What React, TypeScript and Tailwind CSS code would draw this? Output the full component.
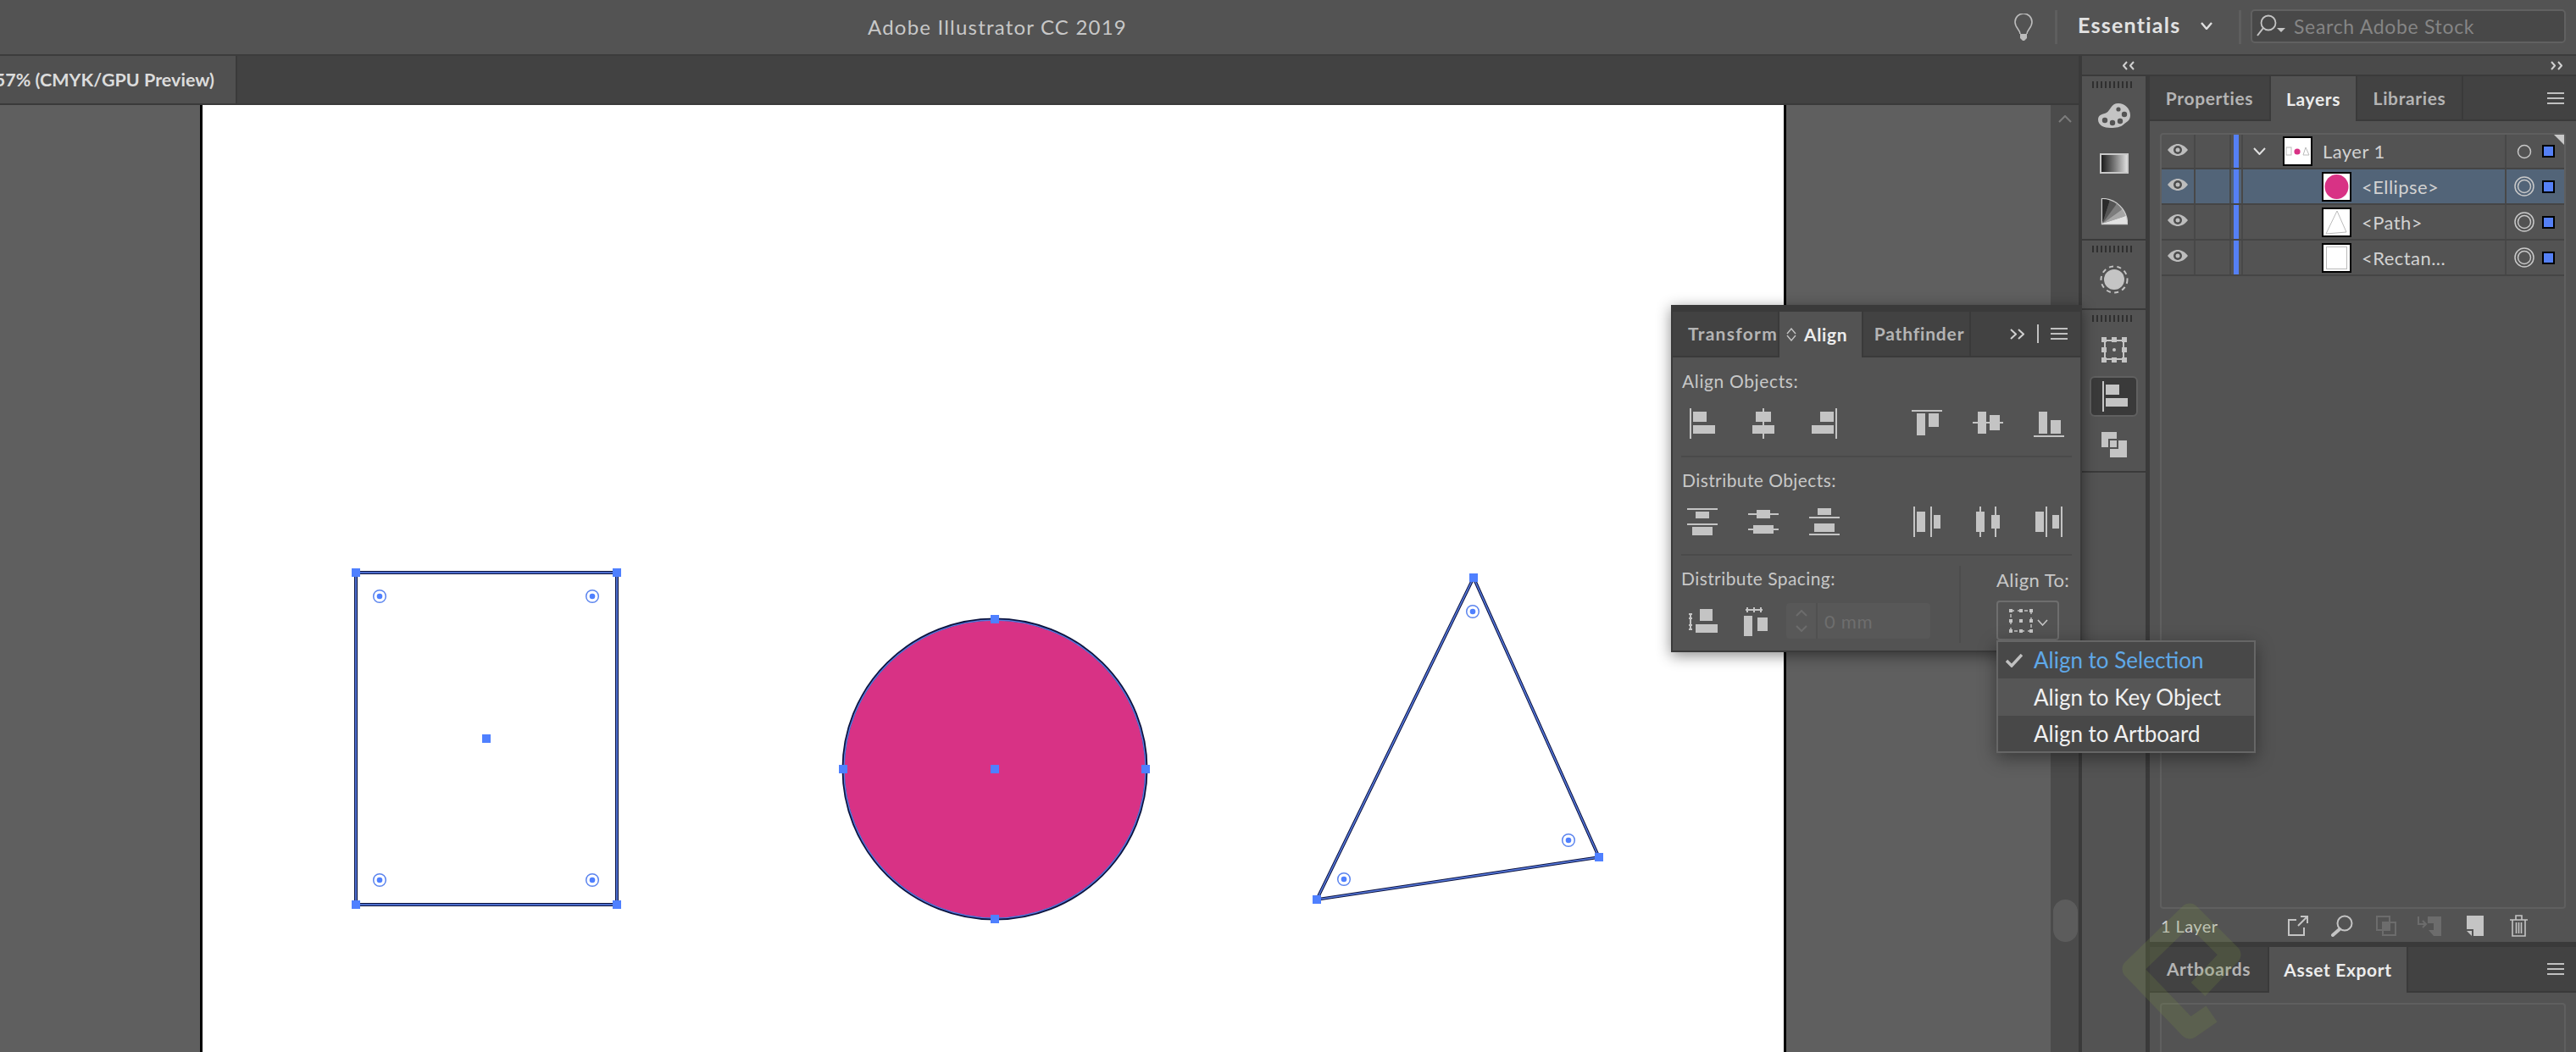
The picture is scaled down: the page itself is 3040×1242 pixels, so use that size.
import type { ReactNode } from 'react'

const ICON = '#c4c4c4'
const HANDLE = '#4f80ff'

function Box({ w, h, children }: { w: number; h: number; children: ReactNode }) {
  return (
    <svg width={w} height={h} viewBox={`0 0 ${w} ${h}`} fill={ICON} className="block shrink-0">
      {children}
    </svg>
  )
}

function R({ x, y, w, h }: { x: number; y: number; w: number; h: number }) {
  return <rect x={x} y={y} width={w} height={h} />
}

function Chevron({ w, h, dir, color = '#d0d0d0', sw = 2 }: { w: number; h: number; dir: 'up' | 'down' | 'left' | 'right'; color?: string; sw?: number }) {
  const pts = {
    down: `1,1 ${w / 2},${h - 1} ${w - 1},1`,
    up: `1,${h - 1} ${w / 2},1 ${w - 1},${h - 1}`,
    left: `${w - 1},1 1,${h / 2} ${w - 1},${h - 1}`,
    right: `1,1 ${w - 1},${h / 2} 1,${h - 1}`,
  }[dir]
  return (
    <svg width={w} height={h} viewBox={`0 0 ${w} ${h}`} fill="none" className="block shrink-0">
      <polyline points={pts} stroke={color} strokeWidth={sw} />
    </svg>
  )
}

function Hamburger({ w }: { w: number }) {
  return (
    <div className="flex flex-col gap-[4px]" style={{ width: w }}>
      <div className="h-[2px] bg-[#c0c0c0]" />
      <div className="h-[2px] bg-[#c0c0c0]" />
      <div className="h-[2px] bg-[#c0c0c0]" />
    </div>
  )
}

function AlignLeftIcon() {
  return (
    <Box w={30} h={36}>
      <R x={0} y={0} w={2} h={36} />
      <R x={4} y={4} w={16} h={12} />
      <R x={4} y={20} w={26} h={10} />
    </Box>
  )
}

const alignIcons: ReactNode[] = [
  <AlignLeftIcon key="a1" />,
  <Box key="a2" w={26} h={36}>
    <R x={12} y={0} w={2} h={36} />
    <R x={4} y={4} w={18} h={12} />
    <R x={0} y={20} w={26} h={10} />
  </Box>,
  <Box key="a3" w={30} h={36}>
    <R x={10} y={4} w={16} h={12} />
    <R x={0} y={20} w={26} h={10} />
    <R x={28} y={0} w={2} h={36} />
  </Box>,
  <Box key="a4" w={36} h={36}>
    <R x={0} y={2} w={36} h={2} />
    <R x={6} y={6} w={10} h={26} />
    <R x={20} y={6} w={12} h={16} />
  </Box>,
  <Box key="a5" w={36} h={36}>
    <R x={0} y={16} w={36} h={2} />
    <R x={6} y={4} w={10} h={26} />
    <R x={20} y={8} w={12} h={18} />
  </Box>,
  <Box key="a6" w={36} h={36}>
    <R x={0} y={32} w={36} h={2} />
    <R x={6} y={4} w={10} h={26} />
    <R x={20} y={14} w={12} h={16} />
  </Box>,
]

const distributeIcons: ReactNode[] = [
  <Box key="d1" w={36} h={36}>
    <R x={0} y={2} w={36} h={2} />
    <R x={0} y={20} w={36} h={2} />
    <R x={10} y={6} w={16} h={8} />
    <R x={6} y={24} w={24} h={10} />
  </Box>,
  <Box key="d2" w={36} h={36}>
    <R x={0} y={8} w={36} h={2} />
    <R x={0} y={26} w={36} h={2} />
    <R x={10} y={4} w={16} h={10} />
    <R x={6} y={22} w={24} h={10} />
  </Box>,
  <Box key="d3" w={36} h={36}>
    <R x={0} y={12} w={36} h={2} />
    <R x={0} y={32} w={36} h={2} />
    <R x={10} y={2} w={16} h={8} />
    <R x={6} y={20} w={24} h={10} />
  </Box>,
  <Box key="d4" w={32} h={36}>
    <R x={0} y={0} w={2} h={36} />
    <R x={20} y={0} w={2} h={36} />
    <R x={4} y={6} w={10} h={24} />
    <R x={24} y={10} w={8} h={16} />
  </Box>,
  <Box key="d5" w={28} h={36}>
    <R x={4} y={0} w={2} h={36} />
    <R x={22} y={0} w={2} h={36} />
    <R x={0} y={6} w={10} h={24} />
    <R x={18} y={10} w={10} h={16} />
  </Box>,
  <Box key="d6" w={32} h={36}>
    <R x={0} y={6} w={10} h={24} />
    <R x={12} y={0} w={2} h={36} />
    <R x={20} y={10} w={8} h={16} />
    <R x={30} y={0} w={2} h={36} />
  </Box>,
]

function IconRow({ icons }: { icons: ReactNode[] }) {
  return (
    <div className="flex h-[36px] ml-[-1px]">
      {icons.slice(0, 3).map((icon, i) => (
        <div key={i} className="w-[72px] flex justify-center">{icon}</div>
      ))}
      <div className="w-[49px]" />
      {icons.slice(3).map((icon, i) => (
        <div key={i} className="w-[72px] flex justify-center">{icon}</div>
      ))}
    </div>
  )
}

function PanelTab({ label, width, active, className = '' }: { label: string; width: number; active?: boolean; className?: string }) {
  return (
    <div
      className={`h-full flex items-center justify-center border-r-2 border-[#3a3a3a] text-[21px] tracking-[0.03em] ${
        active ? 'bg-[#535353] text-[#ececec] font-bold' : 'bg-[#424242] text-[#b4b4b4] font-bold border-b-2'
      } ${className}`}
      style={{ width }}
    >
      {label}
    </div>
  )
}

function Eye() {
  return (
    <svg width="24" height="14" viewBox="0 0 24 14" className="block">
      <path d="M0 7C4 2 8 0 12 0s8 2 12 7c-4 5-8 7-12 7S4 12 0 7Z" fill="#bdbdbd" />
      <circle cx="12" cy="7" r="5" fill="#4c4c4c" />
      <circle cx="12" cy="7" r="2.5" fill="#bdbdbd" />
    </svg>
  )
}

function Thumb({ children }: { children: ReactNode }) {
  return (
    <div className="w-[35px] h-[35px] border-2 border-black bg-white shrink-0">
      <svg width="31" height="31" viewBox="0 0 31 31" className="block">
        {children}
      </svg>
    </div>
  )
}

function LayerRow({
  name,
  thumb,
  selected,
  top,
  height,
}: {
  name: string
  thumb: ReactNode
  selected?: boolean
  top?: boolean
  height: number
}) {
  return (
    <div
      className={`flex border-b-2 border-[#454545] ${selected ? 'bg-[#526478]' : ''}`}
      style={{ height }}
    >
      <div className="w-[40px] flex items-center justify-center border-r-2 border-[#484848] pb-[4px]">
        <Eye />
      </div>
      <div className="w-[42px] border-r-2 border-[#484848]" />
      <div className="w-[14px] pl-[3px] border-r-2 border-[#484848]">
        <div className="w-[6px] h-full bg-[#5580f5]" />
      </div>
      <div className={`flex-1 flex items-center ${top ? 'pl-[12px]' : 'pl-[93px]'}`}>
        {top && (
          <div className="w-[35px]">
            <Chevron w={15} h={9} dir="down" color="#e0e0e0" />
          </div>
        )}
        {thumb}
        <span className="ml-[12px] text-[22px] text-[#d2d2d2] tracking-[0.02em]">{name}</span>
      </div>
      <div className="w-[70px] flex items-center border-l-2 border-[#484848]">
        <svg width="24" height="24" viewBox="0 0 24 24" fill="none" stroke="#c8c8c8" strokeWidth="1.5" className="ml-[9px] block shrink-0">
          <circle cx="12" cy="12" r="7.5" />
          {!top && <circle cx="12" cy="12" r="11" />}
        </svg>
        <div className="ml-[9px] w-[15px] h-[15px] border-2 border-black bg-[#5580f5]" />
      </div>
    </div>
  )
}

function Widget({ x, y }: { x: number; y: number }) {
  return (
    <g>
      <circle cx={x} cy={y} r={7.3} fill="#fff" stroke="#5b84ee" strokeWidth={1.5} />
      <circle cx={x} cy={y} r={3.3} fill={HANDLE} />
    </g>
  )
}

function Handle({ x, y }: { x: number; y: number }) {
  return <rect x={x - 5} y={y - 5} width={10} height={10} fill={HANDLE} />
}

// artboard drawing, coordinates are relative to the white page (x - 239, y - 124)
function Artwork() {
  const ox = 239
  const oy = 124
  const P = (x: number, y: number) => ({ x: x - ox, y: y - oy })
  const tri = [P(1739, 682), P(1887, 1012), P(1554, 1062)]
  const triPts = tri.map((p) => `${p.x},${p.y}`).join(' ')
  return (
    <svg width="1866" height="1118" viewBox="0 0 1866 1118" className="block">
      <rect x={181} y={552} width={308} height={392} fill="#fff" stroke="#0c1440" strokeWidth={4} />
      <rect x={181} y={552} width={308} height={392} fill="none" stroke="#5578dd" strokeWidth={1.8} />
      <Handle {...P(420, 676)} />
      <Handle {...P(728, 676)} />
      <Handle {...P(420, 1068)} />
      <Handle {...P(728, 1068)} />
      <Handle {...P(574, 872)} />
      <Widget {...P(448, 704)} />
      <Widget {...P(699, 704)} />
      <Widget {...P(448, 1039)} />
      <Widget {...P(699, 1039)} />

      <ellipse cx={935} cy={784} rx={179} ry={177} fill="#d83285" stroke="#0c1440" strokeWidth={3} />
      <ellipse cx={935} cy={784} rx={178} ry={176} fill="none" stroke="#5578dd" strokeWidth={1.5} />
      <Handle {...P(1174, 731)} />
      <Handle {...P(1174, 1085)} />
      <Handle {...P(995, 908)} />
      <Handle {...P(1352, 908)} />
      <Handle {...P(1174, 908)} />

      <polygon points={triPts} fill="#fff" stroke="#0c1440" strokeWidth={3.6} />
      <polygon points={triPts} fill="none" stroke="#5578dd" strokeWidth={1.6} />
      {tri.map((p, i) => (
        <Handle key={i} x={p.x} y={p.y} />
      ))}
      <Widget {...P(1738, 722)} />
      <Widget {...P(1851, 992)} />
      <Widget {...P(1586, 1038)} />
    </svg>
  )
}

function Grip() {
  return (
    <div className="flex justify-center gap-[3px] pr-[5px]">
      {Array.from({ length: 10 }).map((_, i) => (
        <div key={i} className="w-[2px] h-[8px] bg-[#2f2f2f]" />
      ))}
    </div>
  )
}

function PaletteIcon() {
  return (
    <svg width="38" height="29" viewBox="0 0 38 29" className="block">
      <path d="M24 0C31 0 38 6 38 14c0 7-5 8-8 11-3 3-9 4-15 4C7 29 0 26 0 19 0 13 6 13 10 11c5-3 5-11 14-11Z" fill={ICON} />
      <circle cx="8" cy="20" r="3.2" fill="#535353" />
      <circle cx="17" cy="23" r="3.2" fill="#535353" />
      <circle cx="26" cy="21" r="3.2" fill="#535353" />
      <circle cx="31" cy="13" r="3.2" fill="#535353" />
      <circle cx="24" cy="7" r="2.6" fill="#535353" />
    </svg>
  )
}

function FanIcon() {
  const cx = 2
  const cy = 30
  const r = 29
  const cols = ['#2b2b2b', '#555', '#7d7d7d', '#a6a6a6', '#e2e2e2']
  const seg = cols.map((c, i) => {
    const a0 = (Math.PI / 2) * (1 - i / cols.length)
    const a1 = (Math.PI / 2) * (1 - (i + 1) / cols.length)
    const d = `M${cx} ${cy}L${cx + r * Math.cos(a0)} ${cy - r * Math.sin(a0)}A${r} ${r} 0 0 1 ${cx + r * Math.cos(a1)} ${cy - r * Math.sin(a1)}Z`
    return <path key={i} d={d} fill={c} />
  })
  return (
    <svg width="32" height="32" viewBox="0 0 32 32" className="block">
      <path d={`M${cx} ${cy}V${cy - r}A${r} ${r} 0 0 1 ${cx + r} ${cy}Z`} fill="none" stroke="#cfcfcf" strokeWidth="2.4" />
      {seg}
    </svg>
  )
}

function TransformIcon() {
  const squares = [
    [0, 0], [12, 0], [24, 0], [0, 12], [24, 12], [0, 24], [12, 24], [24, 24],
  ]
  return (
    <svg width="30" height="30" viewBox="0 0 30 30" fill={ICON} className="block">
      <rect x="4" y="4" width="22" height="22" fill="none" stroke={ICON} strokeWidth="2" />
      {squares.map(([x, y], i) => (
        <rect key={i} x={x} y={y} width="6" height="6" />
      ))}
      <circle cx="15" cy="15" r="2" />
    </svg>
  )
}

function PathfinderIcon() {
  return (
    <svg width="30" height="30" viewBox="0 0 30 30" className="block">
      <rect x="0" y="0" width="18" height="18" fill={ICON} />
      <rect x="10" y="10" width="20" height="20" fill={ICON} />
      <rect x="9" y="9" width="10" height="10" fill={ICON} stroke="#535353" strokeWidth="2" />
    </svg>
  )
}

export default function App() {
  return (
    <div className="relative w-[3040px] h-[1242px] overflow-hidden flex flex-col bg-[#535353] font-['Lato',sans-serif]">
      {/* app bar */}
      <div className="h-[64px] flex items-center shrink-0">
        <div className="pl-[1024px] w-[2377px] text-[24px] text-[#c8c8c8] tracking-[0.05em]">Adobe Illustrator CC 2019</div>
        <svg width="22" height="32" viewBox="0 0 22 32" fill="none" className="block shrink-0">
          <path d="M7 24c0-5-6-7-6-14a10 10 0 0 1 20 0c0 7-6 9-6 14" stroke="#bcbcbc" strokeWidth="1.6" />
          <path d="M7 24h8v5l-3 3h-2l-3-3Z" fill="#bcbcbc" />
        </svg>
        <div className="ml-[26px] w-[3px] h-[40px] bg-[#5e5e5e]" />
        <div className="ml-[24px] w-[122px] pb-[4px] text-[25px] font-bold text-[#e2e2e2] tracking-[0.05em] whitespace-nowrap">Essentials</div>
        <div className="ml-[23px] pb-[3px]">
          <Chevron w={14} h={9} dir="down" color="#e0e0e0" sw={2.4} />
        </div>
        <div className="ml-[31px] w-[3px] h-[40px] bg-[#5e5e5e]" />
        <div className="ml-[11px] w-[372px] h-[40px] flex items-center bg-[#484848] border-2 border-[#616161] rounded-[5px] pl-[5px] mt-[-2px]">
          <svg width="34" height="30" viewBox="0 0 34 30" fill="none" className="block shrink-0">
            <circle cx="14" cy="11" r="8.5" stroke="#c4c4c4" strokeWidth="1.8" />
            <path d="M8 17 1 26" stroke="#c4c4c4" strokeWidth="2" />
            <path d="M24 17h10l-5 5Z" fill="#c4c4c4" />
          </svg>
          <span className="ml-[10px] text-[23px] text-[#858585] tracking-[0.03em]">Search Adobe Stock</span>
        </div>
      </div>
      <div className="h-[2px] bg-[#3c3c3c] shrink-0" />

      <div className="flex flex-1 min-h-0">
        {/* document area */}
        <div className="w-[2453px] flex flex-col">
          <div className="h-[56px] bg-[#424242] shrink-0">
            <div className="relative w-[280px] h-full bg-[#505050] border-r-2 border-[#3a3a3a] flex items-center justify-end overflow-hidden pr-[25px] whitespace-nowrap text-[21.5px] font-bold text-[#dcdcdc]">
              57% (CMYK/GPU Preview)
            </div>
          </div>
          <div className="h-[2px] bg-[#3a3a3a] shrink-0" />
          <div className="flex flex-1 min-h-0 bg-[#5f5f5f] pl-[236px]">
            <div className="w-[1872px] border-x-[3px] border-black bg-white">
              <Artwork />
            </div>
            <div className="w-[312px]" />
            <div className="w-[33px] bg-[#4b4b4b] flex flex-col items-center pt-[12px] pl-[1px]">
              <Chevron w={16} h={9} dir="up" color="#7c7c7c" sw={2} />
              <div className="mt-[917px] w-[29px] h-[50px] rounded-full bg-[#5c5c5c]" />
            </div>
          </div>
        </div>
        <div className="w-[5px] bg-[#3a3a3a]" />

        {/* right docks */}
        <div className="flex-1 flex flex-col">
          <div className="h-[22px] bg-[#4a4a4a] flex items-center justify-between pl-[48px] pr-[16px] shrink-0">
            <div className="flex gap-[2px]">
              <Chevron w={6} h={11} dir="left" />
              <Chevron w={6} h={11} dir="left" />
            </div>
            <div className="flex gap-[2px]">
              <Chevron w={6} h={11} dir="right" />
              <Chevron w={6} h={11} dir="right" />
            </div>
          </div>
          <div className="h-[2px] bg-[#3a3a3a] shrink-0" />
          <div className="flex flex-1 min-h-0">
            {/* icon dock */}
            <div className="w-[75px] flex flex-col bg-[#535353] border-r-0">
              <div className="h-[194px] pt-[6px] border-b-2 border-[#3a3a3a] flex flex-col items-center">
                <Grip />
                <div className="mt-[18px]"><PaletteIcon /></div>
                <div className="mt-[30px] w-[34px] h-[24px] border-2 border-[#c8c8c8] bg-gradient-to-r from-[#1e1e1e] to-[#dedede]" />
                <div className="mt-[29px]"><FanIcon /></div>
              </div>
              <div className="h-[82px] pt-[6px] border-b-2 border-[#3a3a3a] flex flex-col items-center">
                <Grip />
                <svg width="34" height="34" viewBox="0 0 34 34" className="block mt-[15px]">
                  <circle cx="17" cy="17" r="15.5" fill="none" stroke="#c4c4c4" strokeWidth="2" strokeDasharray="5 4.5" />
                  <circle cx="17" cy="17" r="12" fill="#c4c4c4" />
                </svg>
              </div>
              <div className="h-[192px] pt-[6px] border-b-2 border-[#3a3a3a] flex flex-col items-center">
                <Grip />
                <div className="mt-[18px]"><TransformIcon /></div>
                <div className="mt-[16px] w-[57px] h-[48px] rounded-[6px] bg-[#3a3a3a] border-2 border-[#606060] flex items-center justify-center pl-[2px]">
                  <AlignLeftIcon />
                </div>
                <div className="mt-[18px]"><PathfinderIcon /></div>
              </div>
            </div>
            <div className="w-[5px] bg-[#3a3a3a]" />

            {/* layers panel */}
            <div className="flex-1 flex flex-col">
              <div className="h-[53px] flex bg-[#424242] shrink-0">
                <PanelTab label="Properties" width={143} />
                <PanelTab label="Layers" width={102} active />
                <PanelTab label="Libraries" width={125} />
                <div className="flex-1 flex items-center justify-end pr-[14px] border-b-2 border-[#3a3a3a]">
                  <Hamburger w={20} />
                </div>
              </div>
              <div className="h-[930px] px-[12px] pt-[14px] shrink-0">
                <div className="relative h-full border-2 border-[#5f5f5f] rounded-[4px] w-[479px]">
                  <LayerRow
                    height={41}
                    top
                    name="Layer 1"
                    thumb={
                      <Thumb>
                        <rect x="2" y="11" width="6" height="9" fill="none" stroke="#bbb" />
                        <circle cx="15" cy="16" r="3.6" fill="#d83285" />
                        <path d="m25 11-3 9h7Z" fill="none" stroke="#bbb" />
                      </Thumb>
                    }
                  />
                  <LayerRow
                    height={42}
                    selected
                    name="<Ellipse>"
                    thumb={
                      <Thumb>
                        <ellipse cx="15.5" cy="15.5" rx="14" ry="14.5" fill="#d83285" />
                      </Thumb>
                    }
                  />
                  <LayerRow
                    height={42}
                    name="<Path>"
                    thumb={
                      <Thumb>
                        <path d="M16 2 27 27 3 29Z" fill="none" stroke="#bbb" />
                      </Thumb>
                    }
                  />
                  <LayerRow
                    height={42}
                    name="<Rectan..."
                    thumb={
                      <Thumb>
                        <rect x="3.5" y="2.5" width="24" height="26" fill="none" stroke="#bbb" />
                      </Thumb>
                    }
                  />
                  <div className="absolute top-0 right-0 w-0 h-0 border-l-[12px] border-t-[12px] border-l-transparent border-t-[#c8c8c8]" />
                </div>
              </div>
              <div className="h-[39px] flex items-center pl-[13px] shrink-0">
                <span className="w-[150px] text-[20px] text-[#cfcfcf] tracking-[0.02em]">1 Layer</span>
                <svg width="24" height="24" viewBox="0 0 24 24" fill="none" stroke={ICON} strokeWidth="2" className="block shrink-0">
                  <path d="M10 5H1v18h18v-9M12 12 23 1M15 1h8v8" />
                </svg>
                <svg width="26" height="26" viewBox="0 0 26 26" fill="none" stroke={ICON} className="block ml-[27px] shrink-0">
                  <circle cx="16" cy="10" r="8.5" strokeWidth="2" />
                  <path d="M10 17 2 24" strokeWidth="4" strokeLinecap="round" />
                </svg>
                <svg width="24" height="24" viewBox="0 0 24 24" className="block ml-[27px] shrink-0">
                  <rect x="1" y="1" width="15" height="16" fill="none" stroke="#6c6c6c" strokeWidth="2" />
                  <rect x="8" y="8" width="15" height="15" fill="none" stroke="#6c6c6c" strokeWidth="2" />
                  <rect x="8" y="8" width="8" height="9" fill="#6c6c6c" />
                </svg>
                <svg width="28" height="24" viewBox="0 0 28 24" className="block ml-[25px] shrink-0">
                  <path d="M12 1h16v23H19l-6-7h6v-8h-7Z" fill="#6c6c6c" />
                  <path d="M1 1v9h8M6 6l4 4-4 4" fill="none" stroke="#6c6c6c" strokeWidth="2" />
                </svg>
                <svg width="20" height="24" viewBox="0 0 20 24" className="block ml-[30px] shrink-0">
                  <path d="M0 0h20v24H8v-8H0Z" fill={ICON} />
                  <path d="M0 18h6v6Z" fill={ICON} />
                </svg>
                <svg width="21" height="26" viewBox="0 0 21 26" fill="none" stroke={ICON} strokeWidth="1.6" className="block ml-[31px] shrink-0">
                  <path d="M0 6h21M7 6V1h7v5M3 6v19h15V6M7.5 9v13M10.5 9v13M13.5 9v13" />
                </svg>
              </div>
              <div className="h-[6px] bg-[#3a3a3a] shrink-0" />
              <div className="h-[54px] flex bg-[#424242] shrink-0">
                <PanelTab label="Artboards" width={141} />
                <PanelTab label="Asset Export" width={164} active />
                <div className="flex-1 flex items-center justify-end pr-[14px] border-b-2 border-[#3a3a3a]">
                  <Hamburger w={20} />
                </div>
              </div>
              <div className="flex-1 px-[12px] pt-[12px]">
                <div className="h-full w-[479px] border-2 border-b-0 border-[#5f5f5f] rounded-t-[4px]" />
              </div>
            </div>
          </div>
        </div>
      </div>

      {/* floating Align panel */}
      <div className="absolute left-[1972px] top-[360px] w-[485px] h-[410px] bg-[#535353] border-x-2 border-b-2 border-t-[8px] border-[#3a3a3a] shadow-[0_4px_16px_rgba(0,0,0,0.45)] flex flex-col">
        <div className="h-[54px] flex bg-[#424242] shrink-0">
          <div className="w-[126px] h-full flex items-center pl-[18px] overflow-hidden whitespace-nowrap border-r-2 border-b-2 border-[#3a3a3a] text-[21px] font-bold text-[#b4b4b4] tracking-[0.06em]">
            Transform
          </div>
          <div className="w-[99px] h-full flex items-center bg-[#535353] border-r-2 border-[#3a3a3a] pl-[8px]">
            <svg width="12" height="16" viewBox="0 0 12 16" fill="none" stroke="#c4c4c4" strokeWidth="1.4" className="block shrink-0">
              <path d="M1 7 6 1l5 6M1 9l5 6 5-6" />
            </svg>
            <span className="ml-[9px] text-[21px] font-bold text-[#ececec] tracking-[0.03em]">Align</span>
          </div>
          <div className="w-[127px] h-full flex items-center justify-center pl-[7px] border-r-2 border-b-2 border-[#3a3a3a] text-[21px] font-bold text-[#b4b4b4] tracking-[0.04em]">
            Pathfinder
          </div>
          <div className="flex-1 flex items-center border-b-2 border-[#3a3a3a] pl-[46px]">
            <div className="flex gap-[1px]">
              <Chevron w={8} h={13} dir="right" />
              <Chevron w={8} h={13} dir="right" />
            </div>
            <div className="ml-[15px] w-[2px] h-[22px] bg-[#c0c0c0]" />
            <div className="ml-[14px]"><Hamburger w={20} /></div>
          </div>
        </div>
        <div className="pl-[11px] pt-[12px] h-[50px] shrink-0 text-[21px] text-[#c8c8c8] tracking-[0.03em]">Align Objects:</div>
        <div className="mt-[10px]"><IconRow icons={alignIcons} /></div>
        <div className="mx-[10px] mt-[20px] h-[2px] bg-[#4a4a4a]" />
        <div className="pl-[11px] pt-[11px] h-[50px] text-[21px] text-[#c8c8c8] tracking-[0.02em]">Distribute Objects:</div>
        <div className="mt-[8px]"><IconRow icons={distributeIcons} /></div>
        <div className="mx-[10px] mt-[20px] h-[2px] bg-[#4a4a4a]" />
        <div className="flex flex-1 pt-[12px]">
          <div className="w-[340px] border-r-2 border-[#4c4c4c] mb-[9px] pl-[10px]">
            <div className="text-[21px] text-[#c8c8c8] h-[30px] leading-[30px] tracking-[0.02em]">Distribute Spacing:</div>
            <div className="flex items-center mt-[14px] pl-[8px]">
              <svg width="35" height="28" viewBox="0 0 35 28" fill={ICON} className="block shrink-0">
                <rect x="14" y="0" width="15" height="14" />
                <rect x="9" y="18" width="26" height="10" />
                <path d="M1 6h4M1 11h4M1 19h4M1 24h4M3 5v20" stroke={ICON} strokeWidth="2" fill="none" />
              </svg>
              <svg width="28" height="34" viewBox="0 0 28 34" fill={ICON} className="block shrink-0 ml-[31px] mt-[2px]">
                <rect x="0" y="10" width="10" height="24" />
                <rect x="16" y="12" width="12" height="16" />
                <path d="M4 0v6M12 0v6M20 0v6M2 3h20" stroke={ICON} strokeWidth="2" fill="none" />
              </svg>
              <div className="ml-[22px] w-[170px] h-[42px] flex items-center rounded-[4px] bg-[#585858]">
                <div className="w-[37px] h-full flex flex-col items-center justify-center gap-[10px] border-r-2 border-[#505050]">
                  <Chevron w={14} h={8} dir="up" color="#6c6c6c" sw={2} />
                  <Chevron w={14} h={8} dir="down" color="#6c6c6c" sw={2} />
                </div>
                <span className="ml-[8px] text-[22px] text-[#6e6e6e] tracking-[0.03em]">0 mm</span>
              </div>
            </div>
          </div>
          <div className="pl-[42px]">
            <div className="text-[22px] text-[#c8c8c8] h-[34px] leading-[34px] tracking-[0.02em] whitespace-nowrap">Align To:</div>
            <div className="mt-[7px] w-[74px] h-[47px] flex items-center pl-[13px] border-2 border-[#6e6e6e] rounded-[4px]">
              <svg width="28" height="28" viewBox="0 0 28 28" fill={ICON} className="block shrink-0">
                <rect x="2" y="2" width="24" height="24" fill="none" stroke={ICON} strokeWidth="1.4" strokeDasharray="4 4" />
                <rect x="0" y="0" width="4" height="4" />
                <rect x="24" y="0" width="4" height="4" />
                <rect x="0" y="24" width="4" height="4" />
                <rect x="24" y="24" width="4" height="4" />
                <rect x="12" y="0" width="4" height="4" />
                <rect x="12" y="24" width="4" height="4" />
                <rect x="0" y="12" width="4" height="4" />
                <rect x="24" y="12" width="4" height="4" />
                <rect x="12" y="12" width="4" height="4" />
              </svg>
              <div className="ml-[5px] mt-[4px]">
                <Chevron w={13} h={8} dir="down" color="#c4c4c4" sw={1.6} />
              </div>
            </div>
          </div>
        </div>
      </div>

      {/* Align To menu */}
      <div className="absolute left-[2356px] top-[756px] w-[306px] h-[133px] border-2 border-[#666666] bg-[#484848] shadow-[0_6px_20px_rgba(0,0,0,0.4)] flex flex-col text-[26px] text-[#f0f0f0]">
        <div className="h-[43px] flex items-center">
          <svg width="20" height="16" viewBox="0 0 20 16" fill="none" stroke="#c0c0c0" strokeWidth="3.5" className="block ml-[9px] shrink-0">
            <path d="M1 8l6 6L19 1" />
          </svg>
          <span className="ml-[13px] text-[#5fa8e8]">Align to Selection</span>
        </div>
        <div className="h-[44px] flex items-center pl-[42px] bg-[#565656]">Align to Key Object</div>
        <div className="h-[42px] flex items-center pl-[42px]">Align to Artboard</div>
      </div>

      {/* watermark */}
      <svg width="180" height="190" viewBox="0 0 180 190" fill="none" className="absolute left-[2490px] top-[1050px] pointer-events-none">
        <polyline
          points="104,118 143,77 94,28 26,94 94,165 120,147"
          stroke="#7f9440"
          strokeOpacity="0.2"
          strokeWidth="23"
          strokeLinejoin="round"
        />
      </svg>
    </div>
  )
}
